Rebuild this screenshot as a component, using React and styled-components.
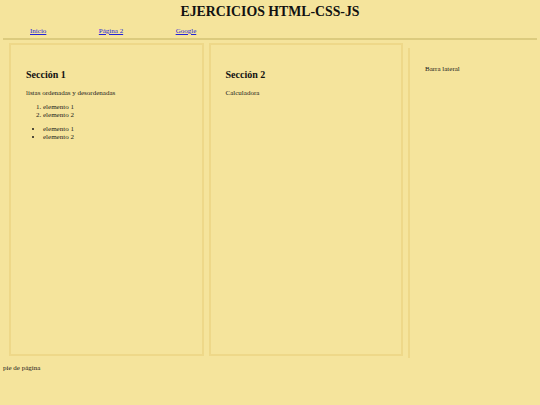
import React from "react";
import styled, { createGlobalStyle } from "styled-components";

const GlobalStyle = createGlobalStyle`
  html, body {
    margin: 0;
    padding: 0;
    background: #f5e49c;
  }
  body {
    padding: 0 3px;
    font-family: "Liberation Serif", "Times New Roman", serif;
    font-size: 7px;
    color: #1a1a1a;
  }
  *, *::before, *::after {
    box-sizing: border-box;
  }
`;

const Header = styled.header`
  text-align: center;
`;

const Title = styled.h1`
  margin: 0;
  padding-top: 3px;
  font-size: 13.8px;
  line-height: 17px;
  font-weight: bold;
  color: #111;
`;

const Nav = styled.nav`
  display: flex;
  padding: 7px 0 0 27px;
  line-height: 8px;
`;

const NavLink = styled.a`
  color: #2323d8;
  text-decoration: underline;
  margin-right: 52.5px;
`;

const Rule = styled.hr`
  margin: 3px 0 0;
  border: none;
  border-top: 2px solid #dccb7e;
`;

const Main = styled.main`
  display: flex;
  align-items: stretch;
  gap: 5px;
  height: 315px;
  margin-top: 3px;
  padding-left: 6px;
`;

const Section = styled.section`
  width: 194.5px;
  flex: none;
  margin-bottom: 2px;
  border: 2px solid #eed889;
  padding: 24px 15px;
`;

const SectionTitle = styled.h2`
  margin: 0 0 8px;
  font-size: 10px;
  line-height: 12px;
  font-weight: bold;
  color: #111;
`;

const Para = styled.p`
  margin: 0 0 6px;
  line-height: 8px;
`;

const List = styled.ol`
  margin: 0 0 6px;
  padding-left: 17px;
  line-height: 8px;
`;

const Bullets = styled.ul`
  margin: 0;
  padding-left: 17px;
  line-height: 8px;
`;

const Sidebar = styled.aside`
  flex: 1;
  margin-top: 5px;
  border-left: 2px solid #eed889;
  padding: 17px 15px;
  line-height: 8px;
`;

const Footer = styled.footer`
  padding-top: 6px;
  line-height: 8px;
`;

export default function App() {
  return (
    <>
      <GlobalStyle />
      <Header>
        <Title>EJERCICIOS HTML-CSS-JS</Title>
      </Header>
      <Nav>
        <NavLink href="#">Inicio</NavLink>
        <NavLink href="#">Página 2</NavLink>
        <NavLink href="#">Google</NavLink>
      </Nav>
      <Rule />
      <Main>
        <Section>
          <SectionTitle>Sección 1</SectionTitle>
          <Para>listas ordenadas y desordenadas</Para>
          <List>
            <li>elemento 1</li>
            <li>elemento 2</li>
          </List>
          <Bullets>
            <li>elemento 1</li>
            <li>elemento 2</li>
          </Bullets>
        </Section>
        <Section>
          <SectionTitle>Sección 2</SectionTitle>
          <Para>Calculadora</Para>
        </Section>
        <Sidebar>Barra lateral</Sidebar>
      </Main>
      <Footer>pie de página</Footer>
    </>
  );
}
